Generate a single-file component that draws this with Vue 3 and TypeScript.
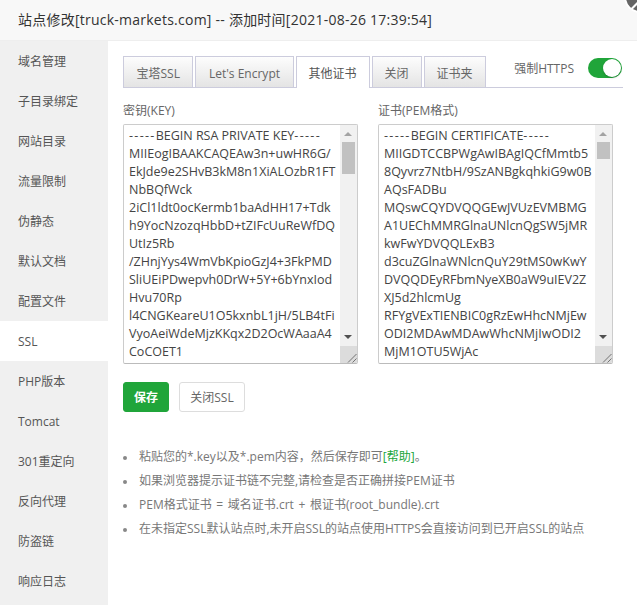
<script setup lang="ts">
const menu = ['域名管理', '子目录绑定', '网站目录', '流量限制', '伪静态', '默认文档', '配置文件', 'SSL', 'PHP版本', 'Tomcat', '301重定向', '反向代理', '防盗链', '响应日志']
const tabs = ['宝塔SSL', "Let's Encrypt", '其他证书', '关闭', '证书夹']

type Field = {
  label: string
  head: string
  body: string
  thumb: string
}

const fields: Field[] = [
  {
    label: '密钥(KEY)',
    head: 'BEGIN RSA PRIVATE KEY',
    thumb: 'thumb-key',
    body: `MIIEogIBAAKCAQEAw3n+uwHR6G/
EkJde9e2SHvB3kM8n1XiALOzbR1FT
NbBQfWck
2iCl1ldt0ocKermb1baAdHH17+Tdk
h9YocNzozqHbbD+tZIFcUuReWfDQ
UtIz5Rb
/ZHnjYys4WmVbKpioGzJ4+3FkPMD
SliUEiPDwepvh0DrW+5Y+6bYnxIod
Hvu70Rp
l4CNGKeareU1O5kxnbL1jH/5LB4tFi
VyoAeiWdeMjzKKqx2D2OcWAaaA4
CoCOET1`
  },
  {
    label: '证书(PEM格式)',
    head: 'BEGIN CERTIFICATE',
    thumb: 'thumb-cert',
    body: `MIIGDTCCBPWgAwIBAgIQCfMmtb5
8Qyvrz7NtbH/9SzANBgkqhkiG9w0B
AQsFADBu
MQswCQYDVQQGEwJVUzEVMBMG
A1UEChMMRGlnaUNlcnQgSW5jMR
kwFwYDVQQLExB3
d3cuZGlnaWNlcnQuY29tMS0wKwY
DVQQDEyRFbmNyeXB0aW9uIEV2Z
XJ5d2hlcmUg
RFYgVExTIENBIC0gRzEwHhcNMjEw
ODI2MDAwMDAwWhcNMjIwODI2
MjM1OTU5WjAc`
  }
]
const tips = [
  '如果浏览器提示证书链不完整,请检查是否正确拼接PEM证书',
  'PEM格式证书 = 域名证书.crt + 根证书(root_bundle).crt',
  '在未指定SSL默认站点时,未开启SSL的站点使用HTTPS会直接访问到已开启SSL的站点'
]
</script>

<template>
  <div class="dialog">
    <header class="title">站点修改[truck-markets.com] -- 添加时间[2021-08-26 17:39:54]</header>
    <span class="close-btn"></span>
    <div class="body">
      <aside class="menu">
        <div v-for="m in menu" :key="m" class="menu-item" :class="{ active: m === 'SSL' }">{{ m }}</div>
      </aside>
      <main class="content">
        <div class="tabs">
          <span v-for="t in tabs" :key="t" class="tab" :class="{ on: t === '其他证书' }">{{ t }}</span>
          <div class="force">
            <span>强制HTTPS</span>
            <span class="switch"><i></i></span>
          </div>
        </div>
        <div class="fields">
          <div v-for="f in fields" :key="f.label" class="field">
            <label>{{ f.label }}</label>
            <div class="box">
              <pre class="text"><span class="dash">-----</span>{{ f.head }}<span class="dash">-----</span>
{{ f.body }}</pre>
              <div class="scrollbar">
                <span class="arrow up"></span>
                <span class="thumb" :class="f.thumb"></span>
                <span class="arrow down"></span>
                <svg class="corner" viewBox="0 0 17 17">
                  <path d="M8 16.5 16.5 8M12.5 16.5l4-4" stroke="#666" stroke-width="0.9" fill="none" />
                </svg>
              </div>
            </div>
          </div>
        </div>
        <div class="actions">
          <button class="btn save">保存</button>
          <button class="btn off">关闭SSL</button>
        </div>
        <ul class="tips">
          <li>粘贴您的*.key以及*.pem内容，然后保存即可<a>[帮助]</a>。</li>
          <li v-for="t in tips" :key="t">{{ t }}</li>
        </ul>
      </main>
    </div>
  </div>
</template>

<style>
html,
body {
  margin: 0;
  background: #fff;
  overflow: hidden;
}
</style>

<style scoped>
.dialog {
  position: relative;
  width: 637px;
  height: 605px;
  overflow: hidden;
  font-family: 'Open Sans', 'Noto Sans CJK SC', sans-serif;
  color: #555;
}
.title {
  height: 40px;
  line-height: 40px;
  padding-left: 18px;
  font-size: 14px;
  letter-spacing: 0.24px;
  color: #333;
  background: #f8f8f8;
  border-bottom: 1px solid #eee;
  white-space: nowrap;
}
.close-btn {
  position: absolute;
  top: -19px;
  left: 624px;
  width: 32px;
  height: 32px;
  box-sizing: border-box;
  border-radius: 50%;
  background: #666;
  border: 2px solid #fff;
}
.close-btn::after {
  content: '';
  position: absolute;
  left: 4px;
  top: 22px;
  width: 9px;
  height: 2px;
  background: #fff;
  transform: rotate(-45deg);
}
.body {
  display: flex;
  height: 564px;
}
.menu {
  width: 108px;
  flex: none;
  background: #f0f0f0;
}
.menu-item {
  height: 40px;
  line-height: 42px;
  padding-left: 18px;
  font-size: 12px;
  color: #555;
}
.menu-item.active {
  background: #fff;
}
.content {
  flex: 1;
  padding: 15px 0 0 15px;
  min-width: 0;
}
.tabs {
  position: relative;
  display: flex;
  width: 500px;
  height: 31px;
  border-bottom: 1px solid #ccd;
  gap: 2px;
}
.tab {
  height: 30px;
  line-height: 33px;
  padding: 0 12px;
  font-size: 12px;
  color: #666;
  border: 1px solid #ccd;
  border-bottom: 0;
  background: linear-gradient(#fdfdfd, #e4e4e4);
}
.tab:nth-child(1),
.tab:nth-child(2) {
  padding: 0 12.5px;
}
.tab.on {
  height: 31px;
  background: #fff;
  color: #555;
}
.force {
  position: absolute;
  right: 1px;
  top: 2px;
  display: flex;
  align-items: center;
  gap: 14px;
  font-size: 12px;
  color: #666;
}
.switch {
  width: 34px;
  height: 20px;
  border-radius: 10px;
  background: #20a53a;
  position: relative;
  display: block;
}
.switch i {
  position: absolute;
  right: 1px;
  top: 1px;
  width: 18px;
  height: 18px;
  border-radius: 50%;
  background: #fff;
  box-shadow: 0 1px 2px rgba(0, 0, 0, 0.2);
}
.fields {
  display: flex;
  gap: 20px;
  margin-top: 13px;
}
.field label {
  display: block;
  font-size: 12px;
  height: 20px;
  line-height: 20px;
  color: #666;
}
.box {
  position: relative;
  width: 233px;
  height: 238px;
  margin-top: 3px;
  border: 1px solid #ccc;
  border-bottom-color: #bbb;
  border-radius: 2px;
  overflow: hidden;
}
.text {
  margin: 0;
  padding: 2px 0 0 5px;
  font-family: inherit;
  font-size: 12.5px;
  line-height: 18px;
  color: #444;
  white-space: pre;
}
.dash {
  letter-spacing: 1.3px;
}
.scrollbar {
  position: absolute;
  top: 0;
  right: 0;
  width: 17px;
  height: 100%;
  background: #f1f1f1;
}
.thumb {
  position: absolute;
  left: 2px;
  width: 13px;
  top: 17px;
  background: #c1c1c1;
}
.thumb-key {
  height: 32px;
}
.thumb-cert {
  height: 17px;
}
.arrow {
  position: absolute;
  left: 4px;
  border-left: 4px solid transparent;
  border-right: 4px solid transparent;
}
.arrow.up {
  top: 7px;
  border-bottom: 4px solid #a3a3a3;
}
.arrow.down {
  bottom: 24px;
  border-top: 4px solid #505050;
}
.corner {
  position: absolute;
  bottom: 0;
  right: 0;
  width: 17px;
  height: 17px;
  background: #dcdcdc;
}
.actions {
  display: flex;
  gap: 10px;
  margin-top: 18px;
}
.btn {
  height: 30px;
  padding: 0;
  font: inherit;
  font-size: 12px;
  border-radius: 3px;
  border: 1px solid #ddd;
}
.save {
  width: 46px;
  background: #20a53a;
  border-color: #20a53a;
  color: #fff;
  font-weight: 700;
}
.off {
  width: 66px;
  background: #fff;
  color: #666;
}
.tips {
  margin: 33px 0 0;
  padding: 0;
  font-size: 12px;
  word-spacing: 1.5px;
  color: #777;
  list-style: none;
}
.tips li {
  line-height: 24px;
  white-space: nowrap;
}
.tips li::before {
  content: '';
  display: inline-block;
  width: 4px;
  height: 4px;
  margin-right: 12px;
  border-radius: 50%;
  vertical-align: middle;
  background: #888;
}
.tips a {
  color: #20a53a;
}
</style>
